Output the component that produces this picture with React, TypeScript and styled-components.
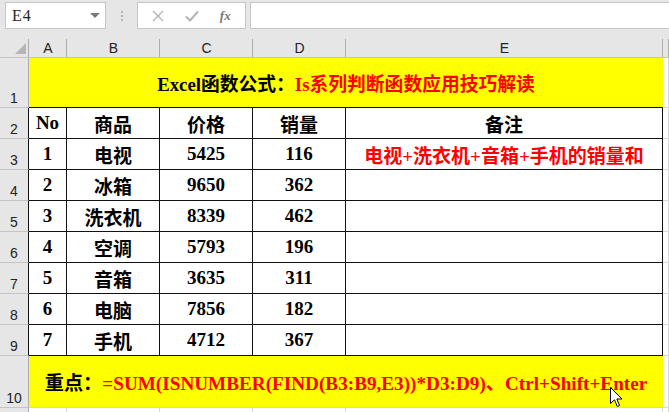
import { Fragment } from "react";
import styled, { createGlobalStyle } from "styled-components";

const GlobalStyle = createGlobalStyle`
  html, body {
    margin: 0;
    padding: 0;
    background: #e6e6e6;
    overflow: hidden;
  }
  body {
    width: 669px;
    height: 412px;
  }
`;

const rows = [
  { no: 1, name: "电视", price: 5425, qty: 116, note: "电视+洗衣机+音箱+手机的销量和" },
  { no: 2, name: "冰箱", price: 9650, qty: 362, note: "" },
  { no: 3, name: "洗衣机", price: 8339, qty: 462, note: "" },
  { no: 4, name: "空调", price: 5793, qty: 196, note: "" },
  { no: 5, name: "音箱", price: 3635, qty: 311, note: "" },
  { no: 6, name: "电脑", price: 7856, qty: 182, note: "" },
  { no: 7, name: "手机", price: 4712, qty: 367, note: "" },
];

const columns = ["A", "B", "C", "D", "E"];

const Page = styled.div`
  position: relative;
  width: 669px;
  height: 412px;
  overflow: hidden;
  background: #e6e6e6;
`;

const TopBar = styled.div`
  display: flex;
  align-items: flex-start;
  height: 36px;
  padding: 2px 0 0 5px;
  box-sizing: border-box;
`;

const NameBox = styled.div`
  display: flex;
  align-items: center;
  justify-content: space-between;
  width: 101px;
  height: 27px;
  box-sizing: border-box;
  background: #fff;
  border: 1px solid #c6c6c6;
  padding: 0 5px 0 6px;
  font-family: "Liberation Serif", serif;
  font-size: 16px;
  letter-spacing: 1px;
  color: #222;
`;

const Caret = styled.span`
  width: 0;
  height: 0;
  border-left: 5px solid transparent;
  border-right: 5px solid transparent;
  border-top: 5px solid #7a7a7a;
`;

const Divider = styled.div`
  display: flex;
  align-items: center;
  justify-content: center;
  width: 31px;
  height: 27px;
`;

const Dots = styled.span`
  display: flex;
  flex-direction: column;
  gap: 2px;

  & > i {
    display: block;
    width: 2px;
    height: 2px;
    background: #b4b4b4;
  }
`;

const FxBox = styled.div`
  display: flex;
  align-items: center;
  justify-content: space-around;
  width: 109px;
  height: 27px;
  box-sizing: border-box;
  background: #fff;
  border: 1px solid #c6c6c6;
  padding: 0 4px;
  margin-right: 4px;
`;

const FxText = styled.span`
  font-family: "Liberation Serif", serif;
  font-style: italic;
  font-weight: bold;
  font-size: 13px;
  color: #777;
`;

const FormulaInput = styled.div`
  flex: 1;
  height: 27px;
  box-sizing: border-box;
  background: #fff;
  border: 1px solid #c6c6c6;
  border-right: none;
`;

const Sheet = styled.div`
  display: grid;
  grid-template-columns: 29px 38px 93px 93px 93px 317px 1fr;
  grid-template-rows: 22px 50px repeat(8, 31px) 52px 20px;
`;

const ColHead = styled.div`
  display: flex;
  align-items: flex-end;
  justify-content: center;
  padding-bottom: 1px;
  box-sizing: border-box;
  border-bottom: 1px solid #c4c4c4;
  font-family: "Liberation Sans", sans-serif;
  font-size: 14px;
  color: #222;
  position: relative;

  &::after {
    content: "";
    position: absolute;
    right: 0;
    top: 3px;
    bottom: 0;
    width: 1px;
    background: #acacac;
  }
`;

const Corner = styled(ColHead)`
  justify-content: flex-end;
  align-items: flex-end;
  padding: 0 3px 3px 0;
`;

const RowHead = styled.div<{ $dark?: boolean }>`
  display: flex;
  align-items: flex-end;
  justify-content: center;
  padding-bottom: 1px;
  box-sizing: border-box;
  border-bottom: 1px solid #c4c4c4;
  border-right: 1px solid ${(p) => (p.$dark ? "#111" : "#acacac")};
  font-family: "Liberation Sans", sans-serif;
  font-size: 14px;
  color: #222;
`;

const Banner = styled.div<{ $bottom?: boolean; $size: number }>`
  grid-column: span 5;
  display: flex;
  align-items: center;
  justify-content: center;
  box-sizing: border-box;
  background: #ffff00;
  border-bottom: 1px solid ${(p) => (p.$bottom ? "#d6d6d6" : "#111")};
  font-family: "Liberation Serif", "Noto Sans CJK SC", serif;
  font-weight: bold;
  font-size: ${(p) => p.$size}px;
  color: #000;
  white-space: nowrap;
`;

const Red = styled.span`
  color: #ff0000;
`;

const Cell = styled.div<{ $red?: boolean }>`
  display: flex;
  align-items: center;
  justify-content: center;
  box-sizing: border-box;
  background: #fff;
  border-right: 1px solid #111;
  border-bottom: 1px solid #111;
  font-family: "Liberation Serif", "Noto Sans CJK SC", serif;
  font-weight: bold;
  font-size: 19px;
  color: ${(p) => (p.$red ? "#ff0000" : "#000")};
  white-space: nowrap;
  overflow: hidden;
`;

const Blank = styled.div`
  box-sizing: border-box;
  background: #fff;
  border-right: 1px solid #d9d9d9;
  border-bottom: 1px solid #d9d9d9;
`;

const Pointer = styled.svg`
  position: absolute;
  left: 610px;
  top: 387px;
`;

function CloseIcon() {
  return (
    <svg width="12" height="12" viewBox="0 0 12 12">
      <path d="M1 1L11 11M11 1L1 11" stroke="#b4b4b4" strokeWidth="1.4" />
    </svg>
  );
}

function CheckIcon() {
  return (
    <svg width="14" height="12" viewBox="0 0 14 12">
      <path d="M1 6.5L5 10.5L13 1.5" stroke="#b4b4b4" strokeWidth="2" fill="none" />
    </svg>
  );
}

export default function App() {
  return (
    <Page>
      <GlobalStyle />
      <TopBar>
        <NameBox>
          E4
          <Caret />
        </NameBox>
        <Divider>
          <Dots>
            <i />
            <i />
            <i />
          </Dots>
        </Divider>
        <FxBox>
          <CloseIcon />
          <CheckIcon />
          <FxText>fx</FxText>
        </FxBox>
        <FormulaInput />
      </TopBar>

      <Sheet>
        <Corner>
          <svg width="11" height="11" viewBox="0 0 11 11">
            <path d="M11 0L11 11L0 11Z" fill="#b5b5b5" />
          </svg>
        </Corner>
        {columns.map((c) => (
          <ColHead key={c}>{c}</ColHead>
        ))}
        <ColHead />

        <RowHead>1</RowHead>
        <Banner $size={18.8}>
          Excel函数公式：<Red>Is系列判断函数应用技巧解读</Red>
        </Banner>
        <Blank />

        <RowHead $dark>2</RowHead>
        <Cell>No</Cell>
        <Cell>商品</Cell>
        <Cell>价格</Cell>
        <Cell>销量</Cell>
        <Cell>备注</Cell>
        <Blank />

        {rows.map((r, i) => (
          <Fragment key={r.no}>
            <RowHead $dark>{i + 3}</RowHead>
            <Cell>{r.no}</Cell>
            <Cell>{r.name}</Cell>
            <Cell>{r.price}</Cell>
            <Cell>{r.qty}</Cell>
            <Cell $red>{r.note}</Cell>
            <Blank />
          </Fragment>
        ))}

        <RowHead>10</RowHead>
        <Banner $bottom $size={19.2}>
          重点：<Red>=SUM(ISNUMBER(FIND(B3:B9,E3))*D3:D9)、Ctrl+Shift+Enter</Red>
        </Banner>
        <Blank />

        <RowHead />
        {columns.map((c) => (
          <Blank key={`r11${c}`} />
        ))}
        <Blank />
      </Sheet>

      <Pointer width="13" height="21" viewBox="0 0 13 21">
        <path
          d="M0.5 0.5L0.5 16.5L4.5 12.8L7.3 19.5L9.6 18.5L6.9 12L12 12Z"
          fill="#fff"
          stroke="#000"
          strokeWidth="1"
        />
      </Pointer>
    </Page>
  );
}
